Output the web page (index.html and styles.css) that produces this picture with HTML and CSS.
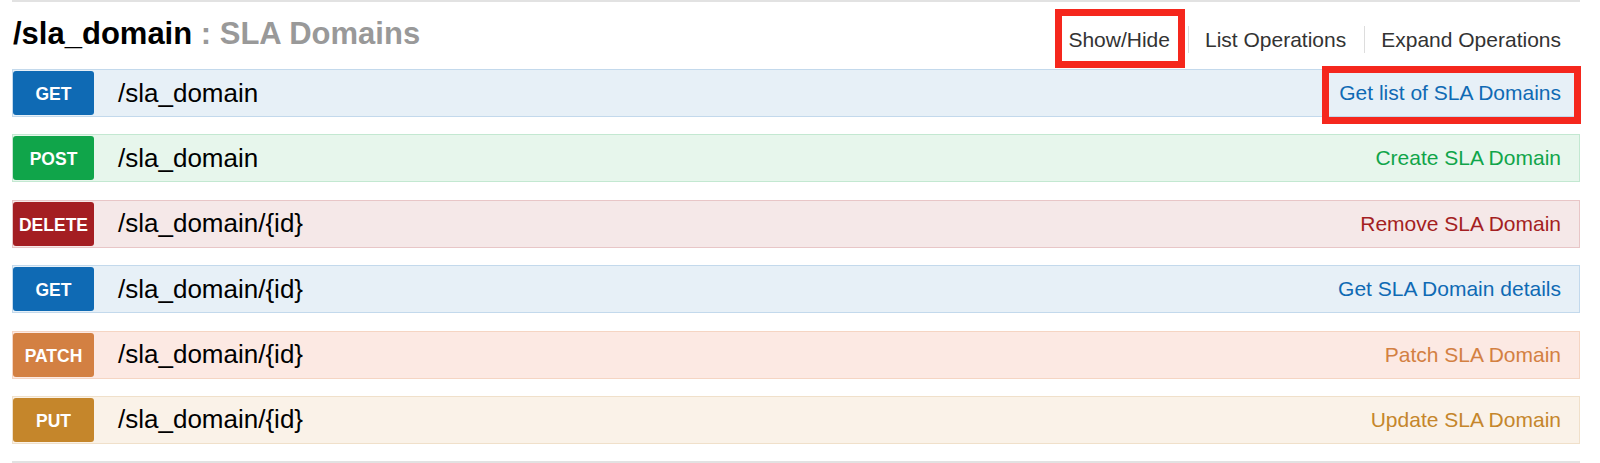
FILE: index.html
```html
<!DOCTYPE html>
<html>
<head>
<meta charset="utf-8">
<link rel="stylesheet" href="styles.css">
</head>
<body>
<div class="resource">
  <div class="heading">
    <h2 class="title"><span class="name">/sla_domain</span> <span class="sub">: SLA Domains</span></h2>
    <ul class="options">
      <li class="opt marked">Show/Hide<span class="mark mark-top"></span></li>
      <li class="opt">List Operations</li>
      <li class="opt">Expand Operations</li>
    </ul>
  </div>
  <ul class="ops">
    <li class="op get">
      <span class="badge">GET</span><span class="path">/sla_domain</span>
      <span class="desc">Get list of SLA Domains</span>
      <span class="mark mark-desc"></span>
    </li>
    <li class="op post">
      <span class="badge">POST</span><span class="path">/sla_domain</span>
      <span class="desc">Create SLA Domain</span>
    </li>
    <li class="op delete">
      <span class="badge">DELETE</span><span class="path">/sla_domain/{id}</span>
      <span class="desc">Remove SLA Domain</span>
    </li>
    <li class="op get">
      <span class="badge">GET</span><span class="path">/sla_domain/{id}</span>
      <span class="desc">Get SLA Domain details</span>
    </li>
    <li class="op patch">
      <span class="badge">PATCH</span><span class="path">/sla_domain/{id}</span>
      <span class="desc">Patch SLA Domain</span>
    </li>
    <li class="op put">
      <span class="badge">PUT</span><span class="path">/sla_domain/{id}</span>
      <span class="desc">Update SLA Domain</span>
    </li>
  </ul>
</div>
</body>
</html>
```
FILE: styles.css
```css
html, body {
  margin: 0;
  padding: 0;
  background: #fff;
  font-family: "Liberation Sans", Arial, sans-serif;
}

.resource {
  margin-left: 12px;
  width: 1568px;
  border-top: 2px solid #e2e2e2;
  border-bottom: 2px solid #e2e2e2;
}

.heading {
  display: flex;
  justify-content: space-between;
  align-items: flex-start;
  height: 67px;
}

.title {
  margin: 14px 0 0 1px;
  font-size: 31px;
  line-height: 36px;
  font-weight: bold;
}

.title .name { color: #000; }
.title .sub { color: #999; }

.options {
  list-style: none;
  margin: 24px 0 0 0;
  padding: 0;
  display: flex;
}

.opt {
  font-size: 21px;
  line-height: 27px;
  color: #333;
  padding: 0 18px 0 16px;
}

.opt + .opt {
  border-left: 1px solid #ddd;
}

.opt:last-child {
  padding-right: 19px;
}

.marked {
  position: relative;
}

.mark {
  position: absolute;
  box-sizing: border-box;
  border: 7px solid #f5271d;
  pointer-events: none;
}

.mark-top {
  left: 3px;
  top: -17px;
  width: 130px;
  height: 59px;
}

.ops {
  list-style: none;
  margin: 0;
  padding: 0;
}

.op {
  position: relative;
  display: flex;
  align-items: center;
  box-sizing: border-box;
  height: 48px;
  margin-bottom: 17.4px;
  padding: 0 18px 0 0;
  border: 1px solid;
}

.badge {
  box-sizing: border-box;
  width: 81px;
  height: 44px;
  padding-top: 3px;
  display: flex;
  align-items: center;
  justify-content: center;
  border-radius: 3px;
  color: #fff;
  font-weight: bold;
  font-size: 17.5px;
}

.path {
  margin-left: 24px;
  font-size: 26px;
  color: #000;
}

.desc {
  margin-left: auto;
  font-size: 21px;
}

.mark-desc {
  right: -2px;
  top: -4px;
  width: 259px;
  height: 58px;
}

.get { background: #e7f0f7; border-color: #c3d9ec; }
.get .badge { background: #0f6ab4; }
.get .desc { color: #0f6ab4; }

.post { background: #e7f6ec; border-color: #c3e8d1; }
.post .badge { background: #10a54a; }
.post .desc { color: #10a54a; }

.delete { background: #f5e8e8; border-color: #e8c6c7; }
.delete .badge { background: #a41e22; }
.delete .desc { color: #a41e22; }

.patch { background: #fce9e3; border-color: #f5d5c3; }
.patch .badge { background: #d38042; }
.patch .desc { color: #d38042; }

.put { background: #faf2e8; border-color: #f0e0ca; }
.put .badge { background: #c5862b; }
.put .desc { color: #c5862b; }
```
